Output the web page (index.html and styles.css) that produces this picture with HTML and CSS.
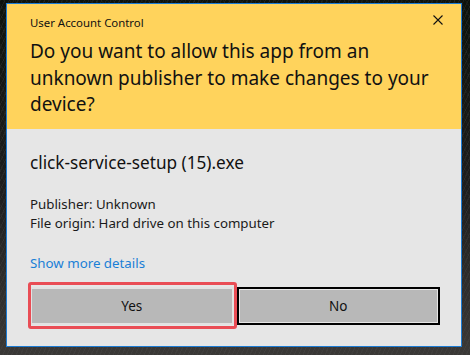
FILE: index.html
```html
<!DOCTYPE html>
<html lang="en">
<head>
    <meta charset="UTF-8">
    <meta name="viewport" content="width=device-width, initial-scale=1.0">
    <title>User Account Control</title>
    <link rel="stylesheet" href="styles.css">
</head>
<body>
    <div class="desktop">
        <div class="dialog">
            <div class="dialog-head">
                <div class="title-bar">
                    <span class="title">User Account Control</span>
                    <button class="close-btn" aria-label="Close">
                        <svg width="10" height="10" viewBox="0 0 10 10">
                            <path d="M0.5 0.5 L9.5 9.5 M9.5 0.5 L0.5 9.5" stroke="#111" stroke-width="1.1" fill="none"/>
                        </svg>
                    </button>
                </div>
                <h1 class="question">Do you want to allow this app from an unknown publisher to make changes to your device?</h1>
            </div>

            <div class="dialog-body">
                <p class="app-name">click-service-setup (15).exe</p>
                <p class="meta">Publisher: Unknown<br>File origin: Hard drive on this computer</p>
                <a class="details-link" href="#">Show more details</a>

                <div class="actions">
                    <div class="btn-wrap">
                        <button class="btn btn-yes">Yes</button>
                        <span class="highlight"></span>
                    </div>
                    <div class="btn-wrap">
                        <button class="btn btn-no">No</button>
                    </div>
                </div>
            </div>
        </div>
    </div>
</body>
</html>
```

FILE: styles.css
```css
html, body {
    margin: 0;
    padding: 0;
}

body {
    width: 470px;
    height: 355px;
    overflow: hidden;
    font-family: "Noto Sans", "Open Sans", sans-serif;
    background-color: #141614;
    background-image:
        repeating-linear-gradient(115deg, rgba(90, 90, 90, 0.18) 0 1px, transparent 1px 4px),
        repeating-linear-gradient(60deg, rgba(70, 70, 70, 0.15) 0 1px, transparent 1px 5px),
        linear-gradient(180deg, #0c120c 0%, #1e1e1e 55%, #3a3836 100%);
}

.desktop {
    padding: 3px 0 0 6px;
}

.dialog {
    width: 454px;
    height: 342px;
    border: 1px solid #1b7bd4;
    display: flex;
    flex-direction: column;
    background-color: #e6e6e6;
}

.dialog-head {
    background-color: #ffd35c;
    height: 125px;
    padding-left: 23px;
    box-sizing: border-box;
}

.title-bar {
    display: flex;
    justify-content: space-between;
    align-items: center;
    height: 34px;
}

.title {
    font-size: 11.4px;
    color: #111;
    padding-top: 2px;
}

.close-btn {
    width: 46px;
    height: 34px;
    border: none;
    background: none;
    padding: 0 0 2px 0;
    display: flex;
    align-items: center;
    justify-content: center;
}

.question {
    margin: 0;
    font-weight: normal;
    font-size: 19px;
    line-height: 26.5px;
    color: #111;
    width: 400px;
}

.dialog-body {
    flex: 1;
    padding: 23px 21px 0 23px;
}

.app-name {
    margin: 0;
    font-size: 17.2px;
    line-height: 22px;
    color: #111;
}

.meta {
    margin: 21px 0 0;
    font-size: 13.3px;
    line-height: 19px;
    color: #1a1a1a;
}

.details-link {
    display: block;
    margin-top: 21px;
    font-size: 13.3px;
    line-height: 19px;
    color: #1a7fd6;
    text-decoration: none;
}

.actions {
    display: flex;
    gap: 3px;
    margin-top: 14px;
}

.btn-wrap {
    position: relative;
    flex: 1;
}

.btn {
    width: 100%;
    height: 38px;
    font-family: inherit;
    font-size: 13.5px;
    color: #111;
    background-color: #b8b8b8;
    border: 2px solid #e2e2e2;
    padding: 0;
}

.btn-no {
    border: 2px solid #000;
    box-shadow: inset 0 0 0 1px #e6e6e6;
}

.highlight {
    position: absolute;
    top: -5px;
    left: -2px;
    right: -3px;
    bottom: -4px;
    border: 3px solid #e94d55;
    border-radius: 3px;
    pointer-events: none;
}
```
